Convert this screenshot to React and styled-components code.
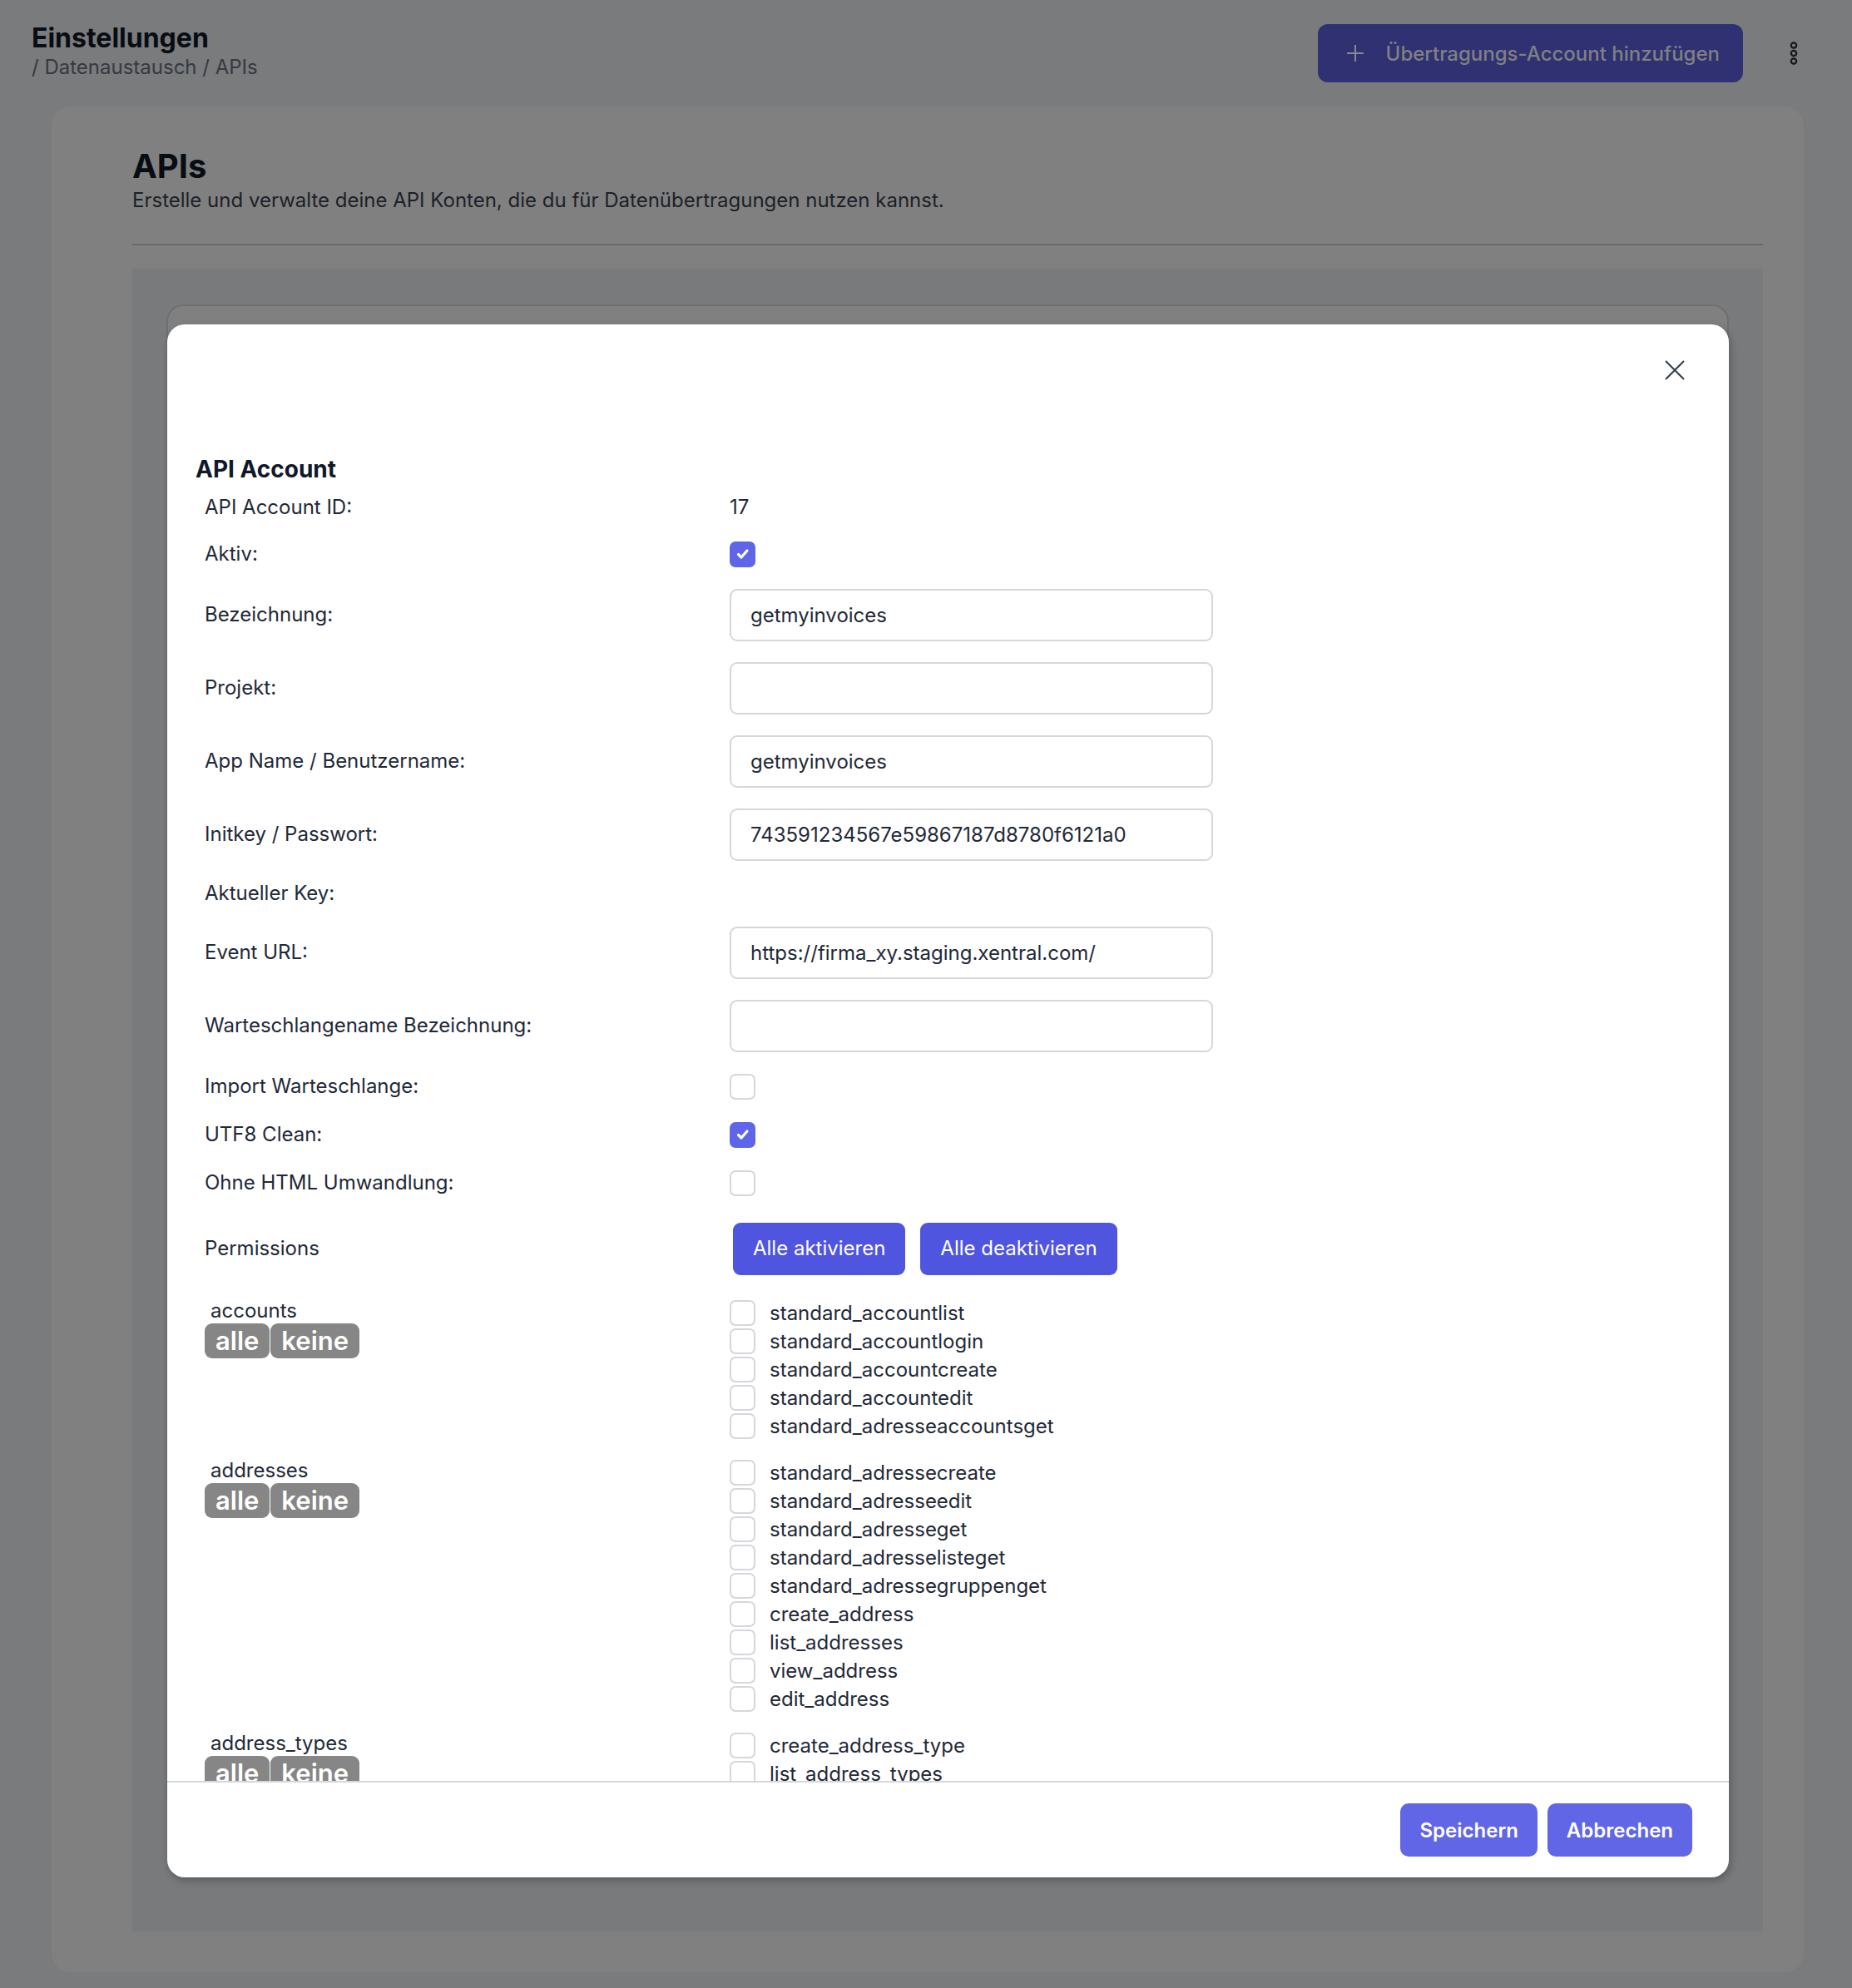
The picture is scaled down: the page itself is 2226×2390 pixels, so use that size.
import React from 'react'
import styled, { createGlobalStyle } from 'styled-components'

const GlobalStyle = createGlobalStyle`
  html, body { margin: 0; padding: 0; }
  body {
    background: #7a7b7d;
    font-family: Inter, "Noto Sans", "Liberation Sans", sans-serif;
    color: #1f2937;
  }
  * { box-sizing: border-box; }
`

const groups = [
  {
    name: 'accounts',
    items: [
      'standard_accountlist',
      'standard_accountlogin',
      'standard_accountcreate',
      'standard_accountedit',
      'standard_adresseaccountsget'
    ]
  },
  {
    name: 'addresses',
    items: [
      'standard_adressecreate',
      'standard_adresseedit',
      'standard_adresseget',
      'standard_adresselisteget',
      'standard_adressegruppenget',
      'create_address',
      'list_addresses',
      'view_address',
      'edit_address'
    ]
  },
  {
    name: 'address_types',
    items: ['create_address_type', 'list_address_types', 'view_address_type', 'edit_address_type']
  }
]

const fields = [
  { label: 'API Account ID:', type: 'text', value: '17', h: 54 },
  { label: 'Aktiv:', type: 'check', value: true, h: 58 },
  { label: 'Bezeichnung:', type: 'input', value: 'getmyinvoices', h: 88 },
  { label: 'Projekt:', type: 'input', value: '', h: 88 },
  { label: 'App Name / Benutzername:', type: 'input', value: 'getmyinvoices', h: 88 },
  { label: 'Initkey / Passwort:', type: 'input', value: '743591234567e59867187d8780f6121a0', h: 88 },
  { label: 'Aktueller Key:', type: 'text', value: '', h: 54 },
  { label: 'Event URL:', type: 'input', value: 'https://firma_xy.staging.xentral.com/', h: 88 },
  { label: 'Warteschlangename Bezeichnung:', type: 'input', value: '', h: 88 },
  { label: 'Import Warteschlange:', type: 'check', value: false, h: 58 },
  { label: 'UTF8 Clean:', type: 'check', value: true, h: 58 },
  { label: 'Ohne HTML Umwandlung:', type: 'check', value: false, h: 58 }
]

const Check = ({ checked }) => (
  <CheckBox checked={checked}>
    {checked && (
      <svg width='20' height='20' viewBox='0 0 20 20' fill='none'>
        <path d='M4.5 10.5l3.5 3.5 7-8' stroke='#fff' strokeWidth='3.2' strokeLinecap='round' strokeLinejoin='round' />
      </svg>
    )}
  </CheckBox>
)

const Field = ({ field }) => (
  <FormRow h={field.h}>
    <Label>{field.label}</Label>
    <Value>
      {field.type === 'text' && field.value}
      {field.type === 'check' && <Check checked={field.value} />}
      {field.type === 'input' && <TextInput readOnly value={field.value} />}
    </Value>
  </FormRow>
)

const PermissionGroup = ({ group }) => (
  <GroupRow>
    <div>
      <GroupName>{group.name}</GroupName>
      <Chips>
        <Chip>alle</Chip>
        <Chip>keine</Chip>
      </Chips>
    </div>
    <div>
      {group.items.map(item => (
        <Item key={item}>
          <Check checked={false} />
          <span>{item}</span>
        </Item>
      ))}
    </div>
  </GroupRow>
)

const App = () => (
  <Page>
    <GlobalStyle />
    <Header>
      <div>
        <Title>Einstellungen</Title>
        <Breadcrumb>/ Datenaustausch / APIs</Breadcrumb>
      </div>
      <HeaderActions>
        <AddButton>
          <svg width='22' height='22' viewBox='0 0 22 22' fill='none'>
            <path d='M11 1v20M1 11h20' stroke='#88888e' strokeWidth='2' />
          </svg>
          Übertragungs-Account hinzufügen
        </AddButton>
        <Kebab>
          <svg width='12' height='28' viewBox='0 0 12 28' fill='none'>
            <circle cx='6' cy='4.5' r='3.2' stroke='#15171b' strokeWidth='2.2' />
            <circle cx='6' cy='14' r='3.2' stroke='#15171b' strokeWidth='2.2' />
            <circle cx='6' cy='23.5' r='3.2' stroke='#15171b' strokeWidth='2.2' />
          </svg>
        </Kebab>
      </HeaderActions>
    </Header>

    <Card>
      <PageTitle>APIs</PageTitle>
      <PageText>Erstelle und verwalte deine API Konten, die du für Datenübertragungen nutzen kannst.</PageText>
      <Divider />
      <InnerPanel>
        <BehindCard />
      </InnerPanel>
    </Card>

    <Modal>
      <ModalBody>
        <ModalTop>
          <CloseButton>
            <svg width='24' height='24' viewBox='0 0 24 24' fill='none'>
              <path d='M1 1l22 22M23 1L1 23' stroke='#2f3a4c' strokeWidth='2' />
            </svg>
          </CloseButton>
        </ModalTop>
        <SectionTitle>API Account</SectionTitle>
        {fields.map(f => <Field key={f.label} field={f} />)}
        <FormRow h={100}>
          <Label>Permissions</Label>
          <Value>
            <PermButtons>
              <PermButton>Alle aktivieren</PermButton>
              <PermButton>Alle deaktivieren</PermButton>
            </PermButtons>
          </Value>
        </FormRow>
        {groups.map(g => <PermissionGroup key={g.name} group={g} />)}
      </ModalBody>
      <ModalFooter>
        <FooterButton>Speichern</FooterButton>
        <FooterButton>Abbrechen</FooterButton>
      </ModalFooter>
    </Modal>
  </Page>
)

const Page = styled.div`
  position: relative;
  width: 2226px;
  height: 2390px;
  overflow: hidden;
`

const Header = styled.header`
  display: flex;
  justify-content: space-between;
  align-items: flex-start;
  height: 128px;
  padding: 27px 55px 0 38px;
`

const Title = styled.div`
  font-size: 32px;
  line-height: 38px;
  font-weight: 700;
  color: #080c13;
`

const Breadcrumb = styled.div`
  font-size: 24px;
  line-height: 32px;
  color: #353940;
`

const HeaderActions = styled.div`
  display: flex;
  align-items: center;
  gap: 46px;
  margin-top: 2px;
`

const AddButton = styled.div`
  display: flex;
  align-items: center;
  gap: 26px;
  height: 70px;
  padding: 0 28px 0 34px;
  border-radius: 12px;
  background: #2f3172;
  color: #808083;
  font-size: 24px;
  font-weight: 500;
`

const Kebab = styled.div`
  display: flex;
  align-items: center;
  justify-content: center;
  width: 30px;
  height: 40px;
`

const Card = styled.section`
  display: flex;
  flex-direction: column;
  height: 2243px;
  margin: 0 58px 0 62px;
  padding: 48px 49px 49px 97px;
  border-radius: 24px;
  background: #808080;
`

const PageTitle = styled.h1`
  margin: 0;
  font-size: 40px;
  line-height: 48px;
  font-weight: 700;
  color: #080c13;
`

const PageText = styled.p`
  margin: 1px 0 0;
  font-size: 24px;
  line-height: 32px;
  color: #1c2028;
`

const Divider = styled.div`
  height: 2px;
  margin-top: 36px;
  background: #696a6d;
`

const InnerPanel = styled.div`
  flex: 1;
  margin-top: 28px;
  padding: 43px 41px 0;
  background: #797a7c;
  overflow: hidden;
`

const BehindCard = styled.div`
  height: 1800px;
  border: 2px solid #6e6f72;
  border-bottom: none;
  border-radius: 20px 20px 0 0;
  background: #808080;
`

const Modal = styled.div`
  position: absolute;
  top: 390px;
  left: 201px;
  width: 1877px;
  height: 1867px;
  display: flex;
  flex-direction: column;
  border-radius: 21px;
  background: #fff;
  overflow: hidden;
  box-shadow: 2px 4px 10px rgba(0, 0, 0, 0.25);
`

const ModalBody = styled.div`
  height: 1751px;
  flex: none;
  padding: 0 34px;
  overflow: hidden;
`

const ModalTop = styled.div`
  display: flex;
  justify-content: flex-end;
  align-items: flex-start;
  height: 155px;
  padding: 43px 19px 0 0;
`

const CloseButton = styled.div`
  display: flex;
  width: 24px;
  height: 24px;
`

const SectionTitle = styled.h2`
  margin: 0;
  font-size: 28px;
  line-height: 38px;
  font-weight: 700;
  color: #111827;
`

const FormRow = styled.div`
  display: grid;
  grid-template-columns: 642px 1fr;
  align-items: center;
  height: ${p => p.h}px;
`

const Label = styled.div`
  padding-left: 11px;
  font-size: 24px;
  line-height: 32px;
  color: #1f2937;
`

const Value = styled.div`
  display: flex;
  align-items: center;
  font-size: 24px;
  line-height: 32px;
  color: #1f2937;
`

const TextInput = styled.input`
  width: 581px;
  height: 63px;
  padding: 0 23px;
  border: 2px solid #d4d7dc;
  border-radius: 9px;
  background: #fff;
  font-family: inherit;
  font-size: 24px;
  color: #1f2937;
  outline: none;
`

const CheckBox = styled.span`
  display: inline-flex;
  flex: none;
  align-items: center;
  justify-content: center;
  width: 31px;
  height: 31px;
  border-radius: 7px;
  border: 2px solid ${p => (p.checked ? '#5f65e8' : '#d4d7dc')};
  background: ${p => (p.checked ? '#5f65e8' : '#fff')};
`

const PermButtons = styled.div`
  display: flex;
  gap: 18px;
  margin-left: 4px;
`

const PermButton = styled.div`
  display: flex;
  align-items: center;
  height: 63px;
  padding: 0 24px;
  border-radius: 9px;
  background: #5055e0;
  color: #fff;
  font-size: 24px;
`

const GroupRow = styled.div`
  display: grid;
  grid-template-columns: 642px 1fr;
  padding: 11px 0 11px;
`

const GroupName = styled.div`
  padding-left: 18px;
  margin-top: -2px;
  font-size: 24px;
  line-height: 31px;
  color: #1f2937;
`

const Chips = styled.div`
  display: flex;
  gap: 1px;
  padding-left: 11px;
`

const Chip = styled.span`
  padding: 0 13px;
  border-radius: 9px;
  background: #868686;
  color: #fff;
  font-size: 31px;
  font-weight: 600;
  line-height: 42px;
`

const Item = styled.div`
  display: flex;
  align-items: center;
  gap: 17px;
  height: 34px;
  margin-top: -1px;
  margin-bottom: 1px;
  font-size: 24px;
  color: #1f2937;
`

const ModalFooter = styled.div`
  display: flex;
  justify-content: flex-end;
  gap: 12px;
  flex: 1;
  padding: 25px 44px 0;
  border-top: 2px solid #d4d7dc;
`

const FooterButton = styled.div`
  display: flex;
  align-items: center;
  height: 64px;
  padding: 0 23px;
  border-radius: 10px;
  background: #6066e5;
  color: #fff;
  font-size: 24px;
  font-weight: 600;
`

export default App
